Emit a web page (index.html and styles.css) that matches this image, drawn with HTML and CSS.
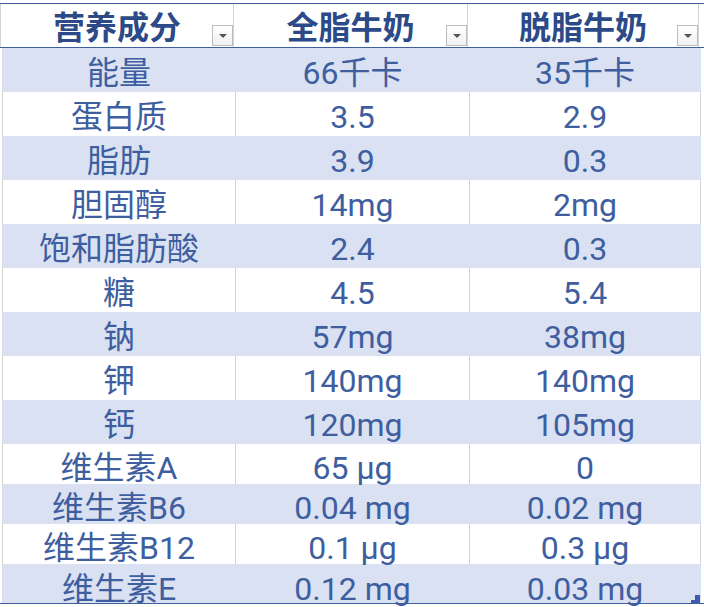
FILE: index.html
```html
<!DOCTYPE html>
<html lang="zh">
<head>
<meta charset="utf-8">
<title>营养成分</title>
<link rel="stylesheet" href="styles.css">
</head>
<body>
<div class="sheet">
  <div class="row head">
    <div class="cell">营养成分<span class="dd"></span></div>
    <div class="cell">全脂牛奶<span class="dd"></span></div>
    <div class="cell">脱脂牛奶<span class="dd"></span></div>
  </div>
  <div class="row band"><div class="cell">能量</div><div class="cell">66千卡</div><div class="cell">35千卡</div></div>
  <div class="row"><div class="cell">蛋白质</div><div class="cell">3.5</div><div class="cell">2.9</div></div>
  <div class="row band"><div class="cell">脂肪</div><div class="cell">3.9</div><div class="cell">0.3</div></div>
  <div class="row"><div class="cell">胆固醇</div><div class="cell">14mg</div><div class="cell">2mg</div></div>
  <div class="row band"><div class="cell">饱和脂肪酸</div><div class="cell">2.4</div><div class="cell">0.3</div></div>
  <div class="row"><div class="cell">糖</div><div class="cell">4.5</div><div class="cell">5.4</div></div>
  <div class="row band"><div class="cell">钠</div><div class="cell">57mg</div><div class="cell">38mg</div></div>
  <div class="row"><div class="cell">钾</div><div class="cell">140mg</div><div class="cell">140mg</div></div>
  <div class="row band"><div class="cell">钙</div><div class="cell">120mg</div><div class="cell">105mg</div></div>
  <div class="row short"><div class="cell">维生素A</div><div class="cell">65 μg</div><div class="cell">0</div></div>
  <div class="row short band"><div class="cell">维生素B6</div><div class="cell">0.04 mg</div><div class="cell">0.02 mg</div></div>
  <div class="row short"><div class="cell">维生素B12</div><div class="cell">0.1 μg</div><div class="cell">0.3 μg</div></div>
  <div class="row short band last"><div class="cell">维生素E</div><div class="cell">0.12 mg</div><div class="cell">0.03 mg<span class="handle"></span></div></div>
</div>
</body>
</html>
```
FILE: styles.css
```css
html, body {
  margin: 0;
  padding: 0;
  background: #ffffff;
}
body {
  width: 704px;
  height: 607px;
  overflow: hidden;
  font-family: "Roboto", "Noto Sans CJK SC", sans-serif;
}
.sheet {
  padding-top: 3px;
  width: 704px;
}
.row {
  display: grid;
  grid-template-columns: 233px 234px 232px 5px;
  padding-left: 2px;
  height: 44px;
  box-sizing: border-box;
}
.row::after {
  content: "";
}
.cell {
  position: relative;
  display: flex;
  align-items: flex-end;
  justify-content: center;
  padding-bottom: 2px;
  box-sizing: border-box;
  border-left: 1px solid #d4d4d4;
  font-size: 32px;
  line-height: 34px;
  color: #3e5ea0;
  white-space: nowrap;
}
.row .cell:nth-child(3) {
  border-right: 1px solid #d4d4d4;
}
.band {
  background: linear-gradient(to right, transparent 2px, #d9e1f2 2px, #d9e1f2 701px, transparent 701px);
}
.band .cell {
  border-left-color: #d9e1f2;
}
.band .cell:first-child {
  border-left-color: #d4dae6;
}
.band .cell:nth-child(3) {
  border-right-color: #d9e1f2;
}
.head {
  height: 45px;
  margin-left: -2px;
  padding-left: 2px;
  border-top: 1px solid #3f5f9b;
  border-bottom: 1px solid #3f5f9b;
}
.head .cell {
  font-weight: bold;
  color: #2c4a88;
  padding-bottom: 0;
  line-height: 38px;
}
.dd {
  position: absolute;
  right: 0px;
  bottom: 1px;
  width: 21px;
  height: 21px;
  box-sizing: border-box;
  border: 1px solid #bdbdbd;
  background: linear-gradient(#ffffff, #f0f0f0);
}
.dd::after {
  content: "";
  position: absolute;
  left: 6px;
  top: 8px;
  border-left: 4px solid transparent;
  border-right: 4px solid transparent;
  border-top: 4px solid #555555;
}
.short {
  height: 40px;
}
.short .cell {
  padding-bottom: 0;
  line-height: 32px;
}
.last {
  height: 40px;
  border-bottom: 1px solid #3f5f9b;
}
.last .cell {
  padding-bottom: 0;
  line-height: 28px;
}
.handle {
  position: absolute;
  right: 0px;
  bottom: 0px;
  width: 9px;
  height: 8px;
  background:
    linear-gradient(#3f5bb0, #3f5bb0) right top / 5px 5px no-repeat,
    linear-gradient(#3f5bb0, #3f5bb0) left bottom / 9px 3px no-repeat;
}
```
